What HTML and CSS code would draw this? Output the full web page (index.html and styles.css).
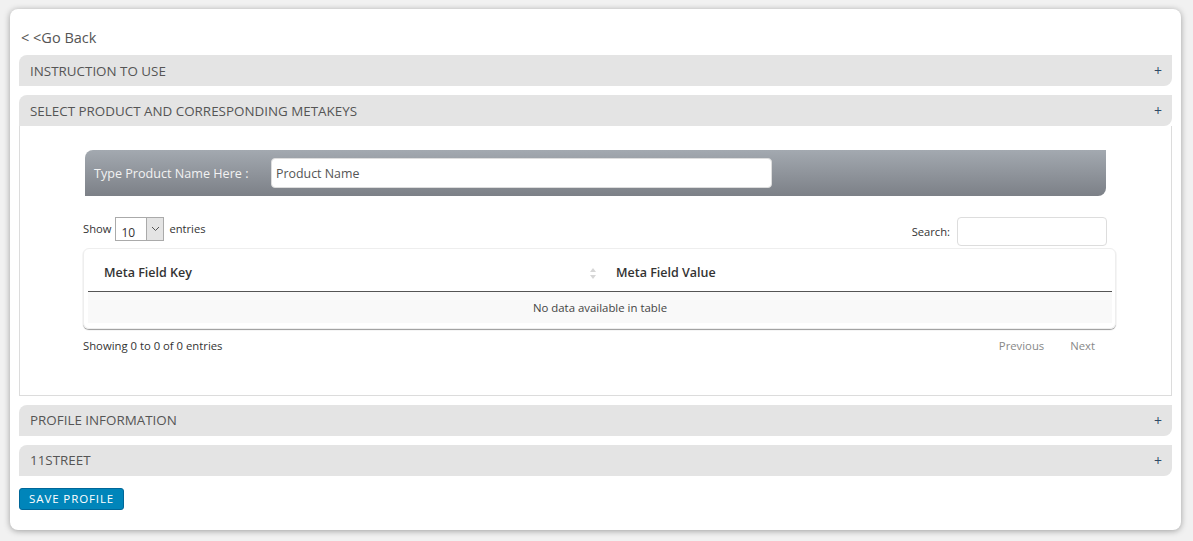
FILE: index.html
```html
<!DOCTYPE html>
<html lang="en">
<head>
    <meta charset="UTF-8">
    <meta name="viewport" content="width=device-width, initial-scale=1.0">
    <title>Product Meta Profile</title>
    <link rel="stylesheet" href="styles.css">
</head>
<body>
    <div class="card">
        <a class="go-back" href="#">&lt; &lt;Go Back</a>

        <div class="acc-head">INSTRUCTION TO USE <span class="plus">+</span></div>

        <div class="acc-head">SELECT PRODUCT AND CORRESPONDING METAKEYS <span class="plus">+</span></div>
        <div class="acc-body">
            <div class="product-bar">
                <label class="product-label">Type Product Name Here :</label>
                <input class="product-input" type="text" placeholder="Product Name">
            </div>

            <div class="dt-top">
                <div class="dt-length">
                    Show
                    <span class="select-box">
                        <span class="select-val">10</span>
                        <span class="select-arrow">
                            <svg width="9" height="6" viewBox="0 0 9 6"><path d="M1 1l3.5 3.5L8 1" fill="none" stroke="#555" stroke-width="1"/></svg>
                        </span>
                    </span>
                    entries
                </div>
                <div class="dt-search">
                    Search: <input class="search-input" type="text">
                </div>
            </div>

            <div class="table-wrap">
                <table class="meta-table">
                    <thead>
                        <tr>
                            <th class="col-key">Meta Field Key
                                <svg class="sort" width="8" height="13" viewBox="0 0 8 13"><path d="M4 1L7 5H1z" fill="#d6d6d6"/><path d="M4 12L7 8H1z" fill="#d6d6d6"/></svg>
                            </th>
                            <th>Meta Field Value</th>
                        </tr>
                    </thead>
                    <tbody>
                        <tr><td colspan="2" class="empty">No data available in table</td></tr>
                    </tbody>
                </table>
            </div>

            <div class="dt-bottom">
                <div class="dt-info">Showing 0 to 0 of 0 entries</div>
                <div class="dt-paging">
                    <span class="page-btn">Previous</span>
                    <span class="page-btn">Next</span>
                </div>
            </div>
        </div>

        <div class="acc-head">PROFILE INFORMATION <span class="plus">+</span></div>
        <div class="acc-head">11STREET <span class="plus">+</span></div>

        <button class="btn-save">SAVE PROFILE</button>
    </div>
</body>
</html>
```

FILE: styles.css
```css
body {
    margin: 0;
    padding: 9px 12px 11px 10px;
    background: #f1f1f1;
    font-family: "Open Sans", Arial, sans-serif;
    color: #444;
}
.card {
    background: #fff;
    border-radius: 8px;
    box-shadow: 0 1px 6px rgba(0, 0, 0, 0.35);
    padding: 20px 9px 20px 9px;
}
.go-back {
    display: block;
    font-size: 14.5px;
    color: #555;
    text-decoration: none;
    margin: 0 0 8px 2px;
    line-height: 18px;
}
.acc-head {
    display: flex;
    justify-content: space-between;
    align-items: center;
    height: 31px;
    padding: 0 11px;
    margin-bottom: 9px;
    background: #e4e4e4;
    border-radius: 8px 0 8px 0;
    font-size: 13.4px;
    color: #555;
}
.acc-head .plus {
    font-size: 14px;
    color: #2f4a66;
    margin-right: -1px;
}
.acc-body {
    border: 1px solid #dcdcdc;
    border-top: none;
    margin-top: -9px;
    margin-bottom: 9px;
    padding: 24px 55px 42px 63px;
}
.product-bar {
    display: flex;
    align-items: center;
    height: 46px;
    margin: 0 10px 0 2px;
    padding: 0 9px;
    border-radius: 8px 0 8px 0;
    background: linear-gradient(to bottom, #a3a9b0, #7c8087);
}
.product-label {
    color: #f2f2f2;
    font-size: 12.6px;
    width: 177px;
}
.product-input {
    width: 501px;
    height: 30px;
    box-sizing: border-box;
    border: 1px solid #ddd;
    border-radius: 4px;
    padding: 0 4px;
    font-family: inherit;
    font-size: 12.4px;
    color: #555;
}
.product-input::placeholder {
    color: #555;
}
.dt-top {
    display: flex;
    justify-content: space-between;
    align-items: flex-start;
    margin-top: 21px;
    font-size: 11.2px;
    color: #333;
}
.dt-length {
    display: flex;
    align-items: center;
    gap: 5px;
    height: 22px;
}
.select-box {
    display: flex;
    width: 49px;
    height: 24px;
    border: 1px solid #aaa;
    box-sizing: border-box;
    background: #fff;
    margin: 2px 0 0 -1px;
}
.select-val {
    flex: 1;
    padding: 6px 0 0 5px;
    font-size: 12px;
}
.select-arrow {
    width: 16px;
    display: flex;
    align-items: center;
    justify-content: center;
    background: #e4e4e4;
    border-left: 1px solid #aaa;
}
.dt-search {
    display: flex;
    align-items: center;
    gap: 7px;
    margin-right: 9px;
}
.search-input {
    width: 150px;
    height: 29px;
    box-sizing: border-box;
    border: 1px solid #ddd;
    border-radius: 4px;
    margin: 0;
}
.table-wrap {
    margin-top: 2px;
    border: 1px solid #eee;
    border-radius: 6px;
    box-shadow: 0 1px 1px #999;
    padding: 0 3px 5px 4px;
}
.meta-table {
    width: 100%;
    border-collapse: collapse;
    font-size: 11.4px;
}
.meta-table th {
    text-align: left;
    font-weight: 600;
    font-size: 12.5px;
    color: #333;
    height: 42px;
    padding: 6px 0 0 16px;
    box-sizing: border-box;
    border-bottom: 1px solid #555;
}
.meta-table .col-key {
    width: 512px;
    position: relative;
}
.sort {
    position: absolute;
    right: 3px;
    top: 18px;
}
.meta-table td.empty {
    text-align: center;
    background: #f9f9f9;
    height: 31px;
    padding: 0;
    color: #444;
}
.dt-bottom {
    display: flex;
    justify-content: space-between;
    align-items: center;
    margin-top: 9px;
    font-size: 11.3px;
    color: #333;
}
.dt-paging {
    display: flex;
    gap: 26px;
    margin-right: 21px;
}
.page-btn {
    color: #888;
    font-size: 11.3px;
}
.btn-save {
    display: block;
    margin-top: 12px;
    padding: 0 9px;
    height: 22px;
    background: #0085ba;
    color: #fff;
    border: 1px solid #006799;
    border-radius: 3px;
    font-family: inherit;
    font-size: 11.5px;
    letter-spacing: 0.9px;
    cursor: pointer;
}
```
